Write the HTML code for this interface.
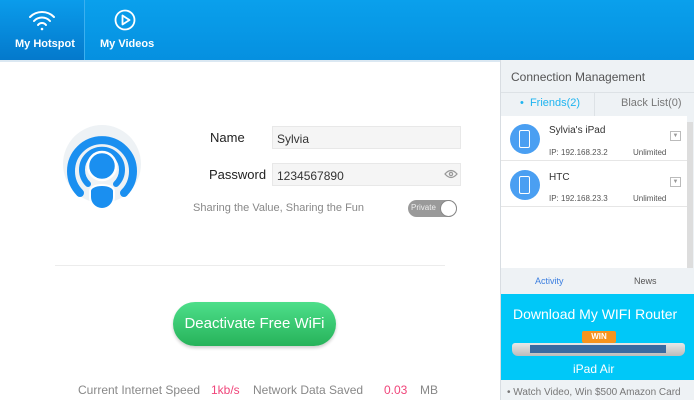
<!DOCTYPE html>
<html><head><style>
*{margin:0;padding:0;box-sizing:border-box}
body{width:694px;height:400px;overflow:hidden;font-family:"Liberation Sans",sans-serif;background:#fff;position:relative}
.a{position:absolute}
.hdr{left:0;top:0;width:694px;height:60px;background:linear-gradient(#0aa0ec,#0590e0)}
.tab1{left:0;top:0;width:84px;height:60px;background:linear-gradient(#0a9ceb,#0479cc)}
.tabtxt{color:#fff;font-weight:bold;font-size:11px}
.inp{background:#f5f5f5;border:1px solid #e8e8e8;font-size:12px;color:#333;padding:5px 0 0 4px}
.lbl{font-size:13px;color:#222}
</style></head><body>
<div class="a hdr"></div>
<div class="a tab1"></div>
<div class="a" style="left:84px;top:0;width:1px;height:60px;background:#3bb0f0"></div>
<svg class="a" style="left:27px;top:9px" width="30" height="22" viewBox="0 0 30 22" fill="none" stroke="#fff" stroke-width="2" stroke-linecap="round"><path d="M3 8a17 17 0 0 1 24 0"/><path d="M7 12a11 11 0 0 1 16 0"/><path d="M11 16a5 5 0 0 1 8 0"/><circle cx="15" cy="20" r="1.3" fill="#fff" stroke="none"/></svg>
<svg class="a" style="left:114px;top:9px" width="22" height="22" viewBox="0 0 22 22" fill="none" stroke="#fff" stroke-width="1.8"><circle cx="11" cy="11" r="9.5"/><path d="M8.5 6.5v9l7-4.5z" stroke-linejoin="round"/></svg>
<div class="a tabtxt" style="left:15px;top:38px">My Hotspot</div>
<div class="a tabtxt" style="left:100px;top:38px">My Videos</div>
<div class="a" style="left:0;top:60px;width:500px;height:2px;background:#dbe8f2"></div>

<svg class="a" style="left:62px;top:122px" width="84" height="90" viewBox="0 0 84 90">
<circle cx="40" cy="42" r="39" fill="#eef2f5"/>
<path d="M18 71A31 31 0 1 1 62 71" fill="none" stroke="#1a8ff0" stroke-width="8" stroke-linecap="round"/>
<path d="M26 62A20 20 0 1 1 54 62" fill="none" stroke="#1a8ff0" stroke-width="6" stroke-linecap="round"/>
<circle cx="40" cy="44" r="14" fill="#1a8ff0" stroke="#fff" stroke-width="2.5"/>
<path d="M28 75a12 12 0 0 0 24 0v-6a12 6 0 0 0 -24 0z" fill="#1a8ff0" stroke="#fff" stroke-width="2"/>
</svg>

<div class="a lbl" style="left:210px;top:130px">Name</div>
<div class="a inp" style="left:272px;top:126px;width:189px;height:23px">Sylvia</div>
<div class="a lbl" style="left:209px;top:167px">Password</div>
<div class="a inp" style="left:272px;top:163px;width:189px;height:23px">1234567890</div>
<svg class="a" style="left:444px;top:169px" width="14" height="10" viewBox="0 0 14 10" fill="none" stroke="#999" stroke-width="1.3"><path d="M1 5q6-7 12 0q-6 7-12 0z"/><circle cx="7" cy="5" r="1.6"/></svg>
<div class="a" style="left:193px;top:202px;font-size:11px;color:#888">Sharing the Value, Sharing the Fun</div>
<div class="a" style="left:408px;top:200px;width:49px;height:17px;border-radius:9px;background:#9a9a9a"></div>
<div class="a" style="left:411px;top:203px;font-size:8px;color:#eee">Private</div>
<div class="a" style="left:440px;top:200px;width:17px;height:17px;border-radius:50%;background:#fff;border:1px solid #888"></div>
<div class="a" style="left:55px;top:265px;width:390px;height:1px;background:#ececec"></div>

<div class="a" style="left:173px;top:302px;width:163px;height:44px;border-radius:22px;background:linear-gradient(#4ddf8a,#27b35a);box-shadow:0 2px 3px rgba(0,0,0,.2);color:#fff;font-size:15px;text-align:center;line-height:44px">Deactivate Free WiFi</div>
<div class="a" style="left:78px;top:383px;font-size:12px;color:#888">Current Internet Speed</div>
<div class="a" style="left:211px;top:383px;font-size:12px;color:#f0457a">1kb/s</div>
<div class="a" style="left:253px;top:383px;font-size:12px;color:#888">Network Data Saved</div>
<div class="a" style="left:384px;top:383px;font-size:12px;color:#f0457a">0.03</div>
<div class="a" style="left:420px;top:383px;font-size:12px;color:#888">MB</div>

<div class="a" style="left:500px;top:60px;width:194px;height:340px;background:#eef2f5;border-left:1px solid #d8dde2"></div>
<div class="a" style="left:511px;top:70px;font-size:12px;color:#555">Connection Management</div>
<div class="a" style="left:501px;top:92px;width:193px;height:1px;background:#dde2e6"></div>
<div class="a" style="left:594px;top:92px;width:1px;height:24px;background:#dde2e6"></div>
<div class="a" style="left:520px;top:97px;font-size:11px;color:#1eb4f0">•&nbsp; Friends(2)</div>
<div class="a" style="left:621px;top:97px;font-size:11px;color:#777">Black List(0)</div>
<div class="a" style="left:501px;top:116px;width:186px;height:152px;background:#fff"></div>
<div class="a" style="left:687px;top:122px;width:6px;height:146px;background:#ddd"></div>
<div class="a" style="left:501px;top:160px;width:186px;height:1px;background:#e6e6e6"></div>
<div class="a" style="left:501px;top:206px;width:186px;height:1px;background:#e6e6e6"></div>
<div class="a" style="left:510px;top:124px;width:30px;height:30px;border-radius:50%;background:#4a9ff2"></div>
<div class="a" style="left:519px;top:130px;width:11px;height:18px;border:1.5px solid #fff;border-radius:2px"></div>
<div class="a" style="left:510px;top:170px;width:30px;height:30px;border-radius:50%;background:#4a9ff2"></div>
<div class="a" style="left:519px;top:176px;width:11px;height:18px;border:1.5px solid #fff;border-radius:2px"></div>
<div class="a" style="left:549px;top:125px;font-size:10px;color:#333">Sylvia's iPad</div>
<div class="a" style="left:549px;top:148px;font-size:8px;color:#555">IP: 192.168.23.2</div>
<div class="a" style="left:633px;top:148px;font-size:8px;color:#555">Unlimited</div>
<div class="a" style="left:549px;top:172px;font-size:10px;color:#333">HTC</div>
<div class="a" style="left:549px;top:194px;font-size:8px;color:#555">IP: 192.168.23.3</div>
<div class="a" style="left:633px;top:194px;font-size:8px;color:#555">Unlimited</div>
<div class="a" style="left:670px;top:131px;width:11px;height:10px;border:1px solid #bbb;font-size:6px;color:#999;text-align:center;line-height:9px">▼</div>
<div class="a" style="left:670px;top:177px;width:11px;height:10px;border:1px solid #bbb;font-size:6px;color:#999;text-align:center;line-height:9px">▼</div>
<div class="a" style="left:535px;top:276px;font-size:9px;color:#3c7fe0">Activity</div>
<div class="a" style="left:634px;top:276px;font-size:9px;color:#555">News</div>
<div class="a" style="left:501px;top:294px;width:193px;height:86px;background:#00c8f8"></div>
<div class="a" style="left:513px;top:306px;font-size:14px;color:#fff">Download My WIFI Router</div>
<div class="a" style="left:582px;top:331px;width:34px;height:12px;background:#f7941d;border-radius:2px;color:#fff;font-size:8px;font-weight:bold;text-align:center;line-height:12px">WIN</div>
<div class="a" style="left:512px;top:343px;width:173px;height:13px;background:linear-gradient(#e8e8e8,#bbb);border-radius:3px 3px 6px 6px"></div>
<div class="a" style="left:530px;top:345px;width:136px;height:8px;background:#3a6aa0"></div>
<div class="a" style="left:573px;top:362px;font-size:12px;color:#fff">iPad Air</div>
<div class="a" style="left:507px;top:387px;font-size:10px;color:#777">• Watch Video, Win $500 Amazon Card</div>
</body></html>
